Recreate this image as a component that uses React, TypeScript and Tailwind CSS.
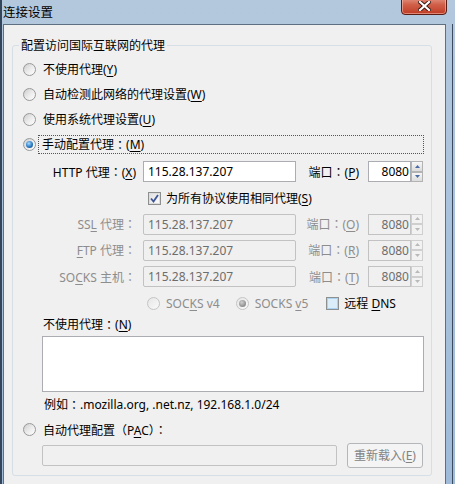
import React from "react";

const U = ({ children }: { children: React.ReactNode }) => (
  <span className="underline underline-offset-[2px] decoration-[1px]">{children}</span>
);

// full-width punctuation, centred like the Windows UI font
const P = ({ children }: { children: React.ReactNode }) => (
  <span className="font-['Noto_Sans_CJK_TC',sans-serif]">{children}</span>
);
const C = () => <P>：</P>;

function Radio({ checked = false, disabled = false }: { checked?: boolean; disabled?: boolean }) {
  return (
    <span
      className={`flex w-[13px] h-[13px] shrink-0 items-center justify-center rounded-full border ${
        disabled
          ? "border-[#c4c4c4] bg-gradient-to-br from-[#e6e6e6] to-[#fafafa]"
          : "border-[#979898] bg-gradient-to-br from-[#cdcdcd] via-[#ebebeb] to-[#ffffff]"
      }`}
    >
      {checked && (
        <span
          className={`block w-[7px] h-[7px] rounded-full ${
            disabled
              ? "bg-[radial-gradient(circle_at_40%_35%,#d0d0d0,#8c8c8c_70%)]"
              : "bg-[radial-gradient(circle_at_40%_35%,#a9dcff,#2a7bc4_55%,#0f3f78)]"
          }`}
        />
      )}
    </span>
  );
}

function Check({ checked = false, hot = false }: { checked?: boolean; hot?: boolean }) {
  return (
    <span className="flex w-[13px] h-[13px] shrink-0 items-center justify-center border border-[#8e8f8f] bg-white">
      <span
        className={`relative flex w-[11px] h-[11px] items-center justify-center border ${
          hot ? "border-[#a9d3f0] bg-[#dcedfa]" : "border-[#dedede] bg-gradient-to-br from-[#e2e2e2] to-[#fbfbfb]"
        }`}
      >
        {checked && (
          <svg width="11" height="11" viewBox="0 0 11 11" className="absolute -left-[1px] -top-[1px]">
            <path d="M2 5.5 L4.5 8.5 L9 2" fill="none" stroke="#3f5595" strokeWidth="1.8" />
          </svg>
        )}
      </span>
    </span>
  );
}

function Spinner({ disabled = false }: { disabled?: boolean }) {
  const c = disabled ? "#b9b9b9" : "#4a6aa5";
  return (
    <div className="flex h-[21px] w-[12px] flex-col">
      {[0, 1].map((i) => (
        <div
          key={i}
          className={`flex flex-1 items-center justify-center border ${
            disabled ? "border-[#cfcfcf] bg-[#f2f2f2]" : "border-[#b3b3b3] bg-gradient-to-b from-[#f6f6f6] to-[#dcdcdc]"
          }`}
        >
          <svg width="5" height="3" viewBox="0 0 5 3">
            <path d={i === 0 ? "M0 3 L2.5 0 L5 3 Z" : "M0 0 L2.5 3 L5 0 Z"} fill={c} />
          </svg>
        </div>
      ))}
    </div>
  );
}

function ProxyRow({
  label,
  port,
  disabled,
  h,
}: {
  label: React.ReactNode;
  port: React.ReactNode;
  disabled?: boolean;
  h: string;
}) {
  const txt = disabled ? "text-[#8d8d8d]" : "text-black";
  return (
    <div className={`flex items-center ${h}`}>
      <div className={`w-[123px] text-right ${txt}`}>{label}</div>
      <div
        className={`ml-[7px] flex h-[21px] w-[153px] items-center border px-[4px] ${
          disabled ? "border-[#c2c2c2] bg-[#f0f0f0] text-[#6d6d6d] rounded-[2px]" : "border-[#abadb3] bg-white text-black"
        }`}
      >
        115.28.137.207
      </div>
      <div className={`w-[63px] text-right ${txt}`}>{port}</div>
      <div className="ml-[9px] flex items-center">
        <div
          className={`flex h-[21px] w-[43px] items-center justify-end border pr-[1px] ${
            disabled ? "border-[#c2c2c2] bg-[#f0f0f0] text-[#6d6d6d]" : "border-[#abadb3] bg-white text-black"
          }`}
        >
          8080
        </div>
        <Spinner disabled={disabled} />
      </div>
    </div>
  );
}

export default function App() {
  return (
    <div className="relative h-[484px] w-[455px] overflow-hidden border-l-2 border-[#34455a] bg-gradient-to-b from-[#b3c8dd] via-[#a9c2dc] to-[#9fbbd9] font-['Noto_Sans','Noto_Sans_CJK_SC',sans-serif] text-[12px] leading-[17px] text-black">
      {/* title bar */}
      <div className="flex h-[24px] items-center pl-[1px] text-[12.5px] text-black">连接设置</div>
      <div className="absolute left-[399px] top-[-6px] flex h-[21px] w-[46px] items-center justify-center rounded-b-[4px] border border-[#5b1c14] bg-gradient-to-b from-[#e9a99b] via-[#d0604a] to-[#c03a22] shadow-[inset_0_0_0_1px_rgba(255,210,200,0.5)]">
        <svg width="13" height="10" viewBox="0 0 13 10" className="mt-[3px]">
          <path d="M2 1 L11 9 M11 1 L2 9" stroke="#3a1a14" strokeWidth="4" strokeLinecap="square" />
          <path d="M2 1 L11 9 M11 1 L2 9" stroke="#ffffff" strokeWidth="2.2" strokeLinecap="square" />
        </svg>
      </div>
      <div className="absolute right-[2px] top-[24px] h-[460px] w-px bg-[#3c4c60]" />

      {/* client area */}
      <div className="ml-[1px] h-[460px] w-[443px] border-l border-r border-t border-[#5e6f82] bg-[#f0f0f0] px-[8px] pt-[12px]">
        <fieldset className="w-[420px] rounded-[3px] border border-[#d5dfe5] pb-[7px]">
          <legend className="ml-[6px] px-[2px] leading-[17px]">配置访问国际互联网的代理</legend>
          <div className="mt-[3px] flex flex-col pl-[10px]">
            <div className="flex h-[25px] items-center gap-[7px]">
              <Radio />
              <span>不使用代理(<U>Y</U>)</span>
            </div>
            <div className="flex h-[25px] items-center gap-[7px]">
              <Radio />
              <span>自动检测此网络的代理设置(<U>W</U>)</span>
            </div>
            <div className="flex h-[25px] items-center gap-[7px]">
              <Radio />
              <span>使用系统代理设置(<U>U</U>)</span>
            </div>
            <div className="flex h-[25px] items-center">
              <Radio checked />
              <div className="ml-[2px] mr-[7px] flex h-[19px] flex-1 items-center border border-dotted border-[#555] pl-[3px]">
                手动配置代理<C />(<U>M</U>)
              </div>
            </div>
          </div>

          <div className="flex flex-col">
            <ProxyRow
              h="h-[29px]"
              label={
                <>
                  HTTP 代理<C />(<U>X</U>)
                </>
              }
              port={
                <>
                  端口<C />(<U>P</U>)
                </>
              }
            />
            <div className="flex h-[25px] items-center pl-[135px]">
              <Check checked />
              <span className="ml-[5px]">
                为所有协议使用相同代理(<U>S</U>)
              </span>
            </div>
            <ProxyRow
              disabled
              h="h-[26px]"
              label={
                <>
                  SS<U>L</U> 代理<C />
                </>
              }
              port={
                <>
                  端口<C />(<U>O</U>)
                </>
              }
            />
            <ProxyRow
              disabled
              h="h-[26px]"
              label={
                <>
                  <U>F</U>TP 代理<C />
                </>
              }
              port={
                <>
                  端口<C />(<U>R</U>)
                </>
              }
            />
            <ProxyRow
              disabled
              h="h-[27px]"
              label={
                <>
                  SO<U>C</U>KS 主机<C />
                </>
              }
              port={
                <>
                  端口<C />(<U>T</U>)
                </>
              }
            />
            <div className="flex h-[26px] items-center pl-[134px]">
              <Radio disabled />
              <span className="ml-[6px] text-[#8d8d8d]">
                SOC<U>K</U>S v4
              </span>
              <span className="ml-[16px]">
                <Radio checked disabled />
              </span>
              <span className="ml-[6px] text-[#8d8d8d]">
                SOCKS <U>v</U>5
              </span>
              <span className="ml-[18px]">
                <Check hot />
              </span>
              <span className="ml-[5px]">
                远程 <U>D</U>NS
              </span>
            </div>
          </div>

          <div className="flex flex-col pl-[29px] pr-[6px]">
            <div className="flex h-[17px] items-center pl-[1px]">
              不使用代理<C />(<U>N</U>)
            </div>
            <div className="mt-[3px] h-[56px] w-[382px] border border-[#abadb3] bg-white" />
            <div className="flex h-[25px] items-center pl-[2px]">
              例如<C />.mozilla.org, .net.nz, 192.168.1.0/24
            </div>
          </div>

          <div className="flex h-[25px] items-center gap-[7px] pl-[10px]">
            <Radio />
            <span>
              自动代理配置<P>（</P>P<U>A</U>C<P>）</P>
              <C />
            </span>
          </div>
          <div className="flex h-[26px] items-center pl-[29px]">
            <div className="h-[21px] w-[295px] rounded-[2px] border border-[#c2c2c2] bg-[#f0f0f0]" />
            <div className="ml-[10px] flex h-[25px] w-[76px] items-center justify-center rounded-[3px] border border-[#b3b7ba] bg-[#f4f4f4] text-[#838383]">
              重新载入(<U>E</U>)
            </div>
          </div>
        </fieldset>
      </div>
    </div>
  );
}
